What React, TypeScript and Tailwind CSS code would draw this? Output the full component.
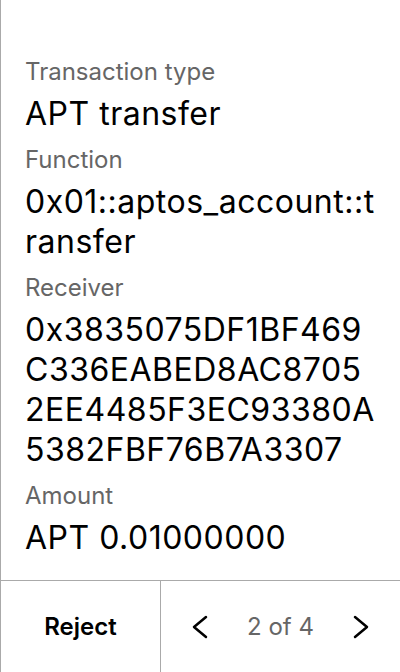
import React from 'react';

// values are pre-split into the lines shown on the device screen
const fields = [
  { label: 'Transaction type', lines: ['APT transfer'] },
  { label: 'Function', lines: ['0x01::aptos_account::t', 'ransfer'] },
  {
    label: 'Receiver',
    lines: ['0x3835075DF1BF469', 'C336EABED8AC8705', '2EE4485F3EC93380A', '5382FBF76B7A3307'],
  },
  { label: 'Amount', lines: ['APT 0.01000000'] },
];

const Chevron = ({ dir }: { dir: 'left' | 'right' }) => (
  <svg width="24" height="24" viewBox="0 0 24 24" fill="none" stroke="#000" strokeWidth="2.5" strokeLinecap="round" strokeLinejoin="round">
    {dir === 'left' ? <polyline points="18,2 6,12 18,22" /> : <polyline points="6,2 18,12 6,22" />}
  </svg>
);

const App = () => {
  return (
    <div className="w-[400px] h-[672px] flex flex-col bg-white border-l border-[#aaaaaa] font-['Inter',sans-serif] text-black">
      {/* Transaction details */}
      <div className="flex-1 px-6 pt-[46px]">
        {fields.map((f) => (
          <div key={f.label} className="mt-[12px]">
            <div className="text-[24px] leading-[28px] text-[#666666]">{f.label}</div>
            <div className="mt-[8px] text-[32px] leading-[40px] tracking-[0.5px] whitespace-nowrap">
              {f.lines.map((l) => (
                <div key={l}>{l}</div>
              ))}
            </div>
          </div>
        ))}
      </div>

      {/* Footer */}
      <div className="h-[92px] flex border-t border-[#aaaaaa]">
        <button className="w-[160px] border-r border-[#aaaaaa] flex items-center justify-center text-[24px] font-semibold">
          Reject
        </button>
        <div className="flex-1 flex items-center justify-between px-[27px]">
          <Chevron dir="left" />
          <span className="text-[24px] text-[#666666]">2 of 4</span>
          <Chevron dir="right" />
        </div>
      </div>
    </div>
  );
};

export default App;
